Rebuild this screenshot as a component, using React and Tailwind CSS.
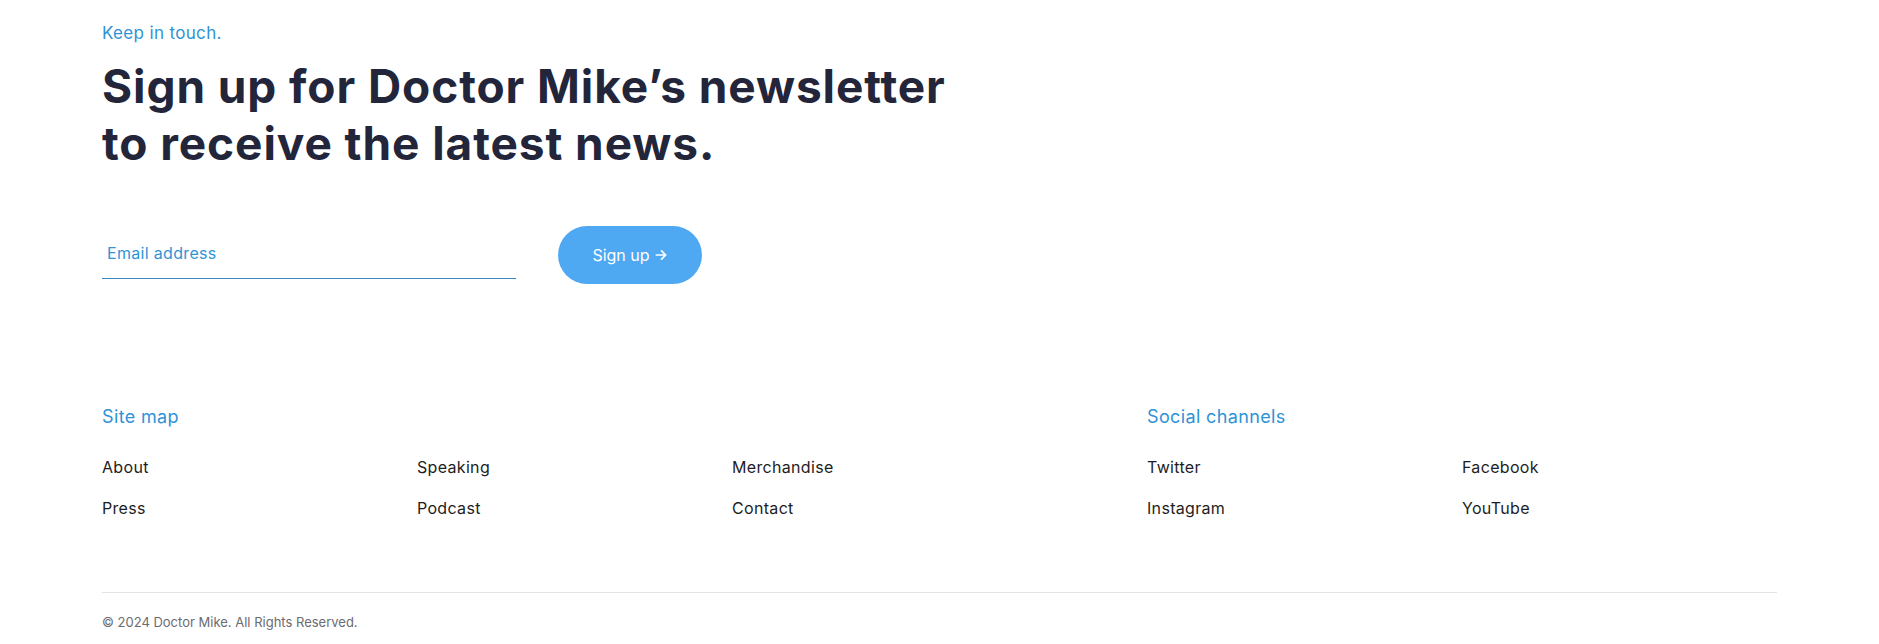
import React from 'react';

const siteMap = ['About', 'Speaking', 'Merchandise', 'Press', 'Podcast', 'Contact'];
const socials = ['Twitter', 'Facebook', 'Instagram', 'YouTube'];

const App = () => {
    return (
        <div className="min-h-[644px] bg-white px-[102px] pt-[21px] font-['Inter','Liberation_Sans',sans-serif] text-[#1f2233]">
            {/* Newsletter */}
            <section>
                <p className="text-[17px] leading-[24px] tracking-[0.02em] text-[#2f93d6]">Keep in touch.</p>
                <h2 className="mt-[13px] text-[46px] leading-[57px] font-bold tracking-[0.02em] text-[#23263a]">
                    Sign up for Doctor Mike’s newsletter
                    <br />
                    to receive the latest news.
                </h2>

                <form className="mt-[54px] flex items-start gap-[42px]" onSubmit={(e) => e.preventDefault()}>
                    <label className="mt-[10px] w-[414px] border-b border-[#3a86bf] pb-[13px] pt-[5px]">
                        <input
                            type="email"
                            placeholder="Email address"
                            className="w-full bg-transparent px-[5px] text-[16px] leading-[22px] tracking-[0.02em] text-[#2f93d6] outline-none placeholder:text-[#2f93d6]"
                        />
                    </label>
                    <button
                        type="submit"
                        className="flex h-[58px] w-[144px] items-center justify-center gap-1 rounded-full bg-[#4ea8f2] text-[16px] text-white"
                    >
                        Sign up
                        <svg className="h-[14px] w-[14px]" fill="none" stroke="currentColor" viewBox="0 0 24 24">
                            <path strokeLinecap="round" strokeLinejoin="round" strokeWidth={3} d="M4 12h15m-6-7l7 7-7 7" />
                        </svg>
                    </button>
                </form>
            </section>

            {/* Links */}
            <section className="mt-[121px] flex">
                <div className="w-[1045px]">
                    <h3 className="text-[18px] leading-[24px] tracking-[0.02em] text-[#2f93d6]">Site map</h3>
                    <ul className="mt-[26px] grid w-[945px] grid-cols-3 gap-y-[17px] text-[16px] leading-[24px] tracking-[0.02em] text-[#1d1d24]">
                        {siteMap.map((item) => (
                            <li key={item}>{item}</li>
                        ))}
                    </ul>
                </div>
                <div className="flex-1">
                    <h3 className="text-[18px] leading-[24px] tracking-[0.02em] text-[#2f93d6]">Social channels</h3>
                    <ul className="mt-[26px] grid grid-cols-2 gap-y-[17px] text-[16px] leading-[24px] tracking-[0.02em] text-[#1d1d24]">
                        {socials.map((item) => (
                            <li key={item}>{item}</li>
                        ))}
                    </ul>
                </div>
            </section>

            {/* Footer */}
            <footer className="mt-[72px] border-t border-[#e3e3e6] pt-[20px] pb-[14px]">
                <p className="text-[13px] leading-[18px] text-[#6b6b72]">© 2024 Doctor Mike. All Rights Reserved.</p>
            </footer>
        </div>
    );
};

export default App;
